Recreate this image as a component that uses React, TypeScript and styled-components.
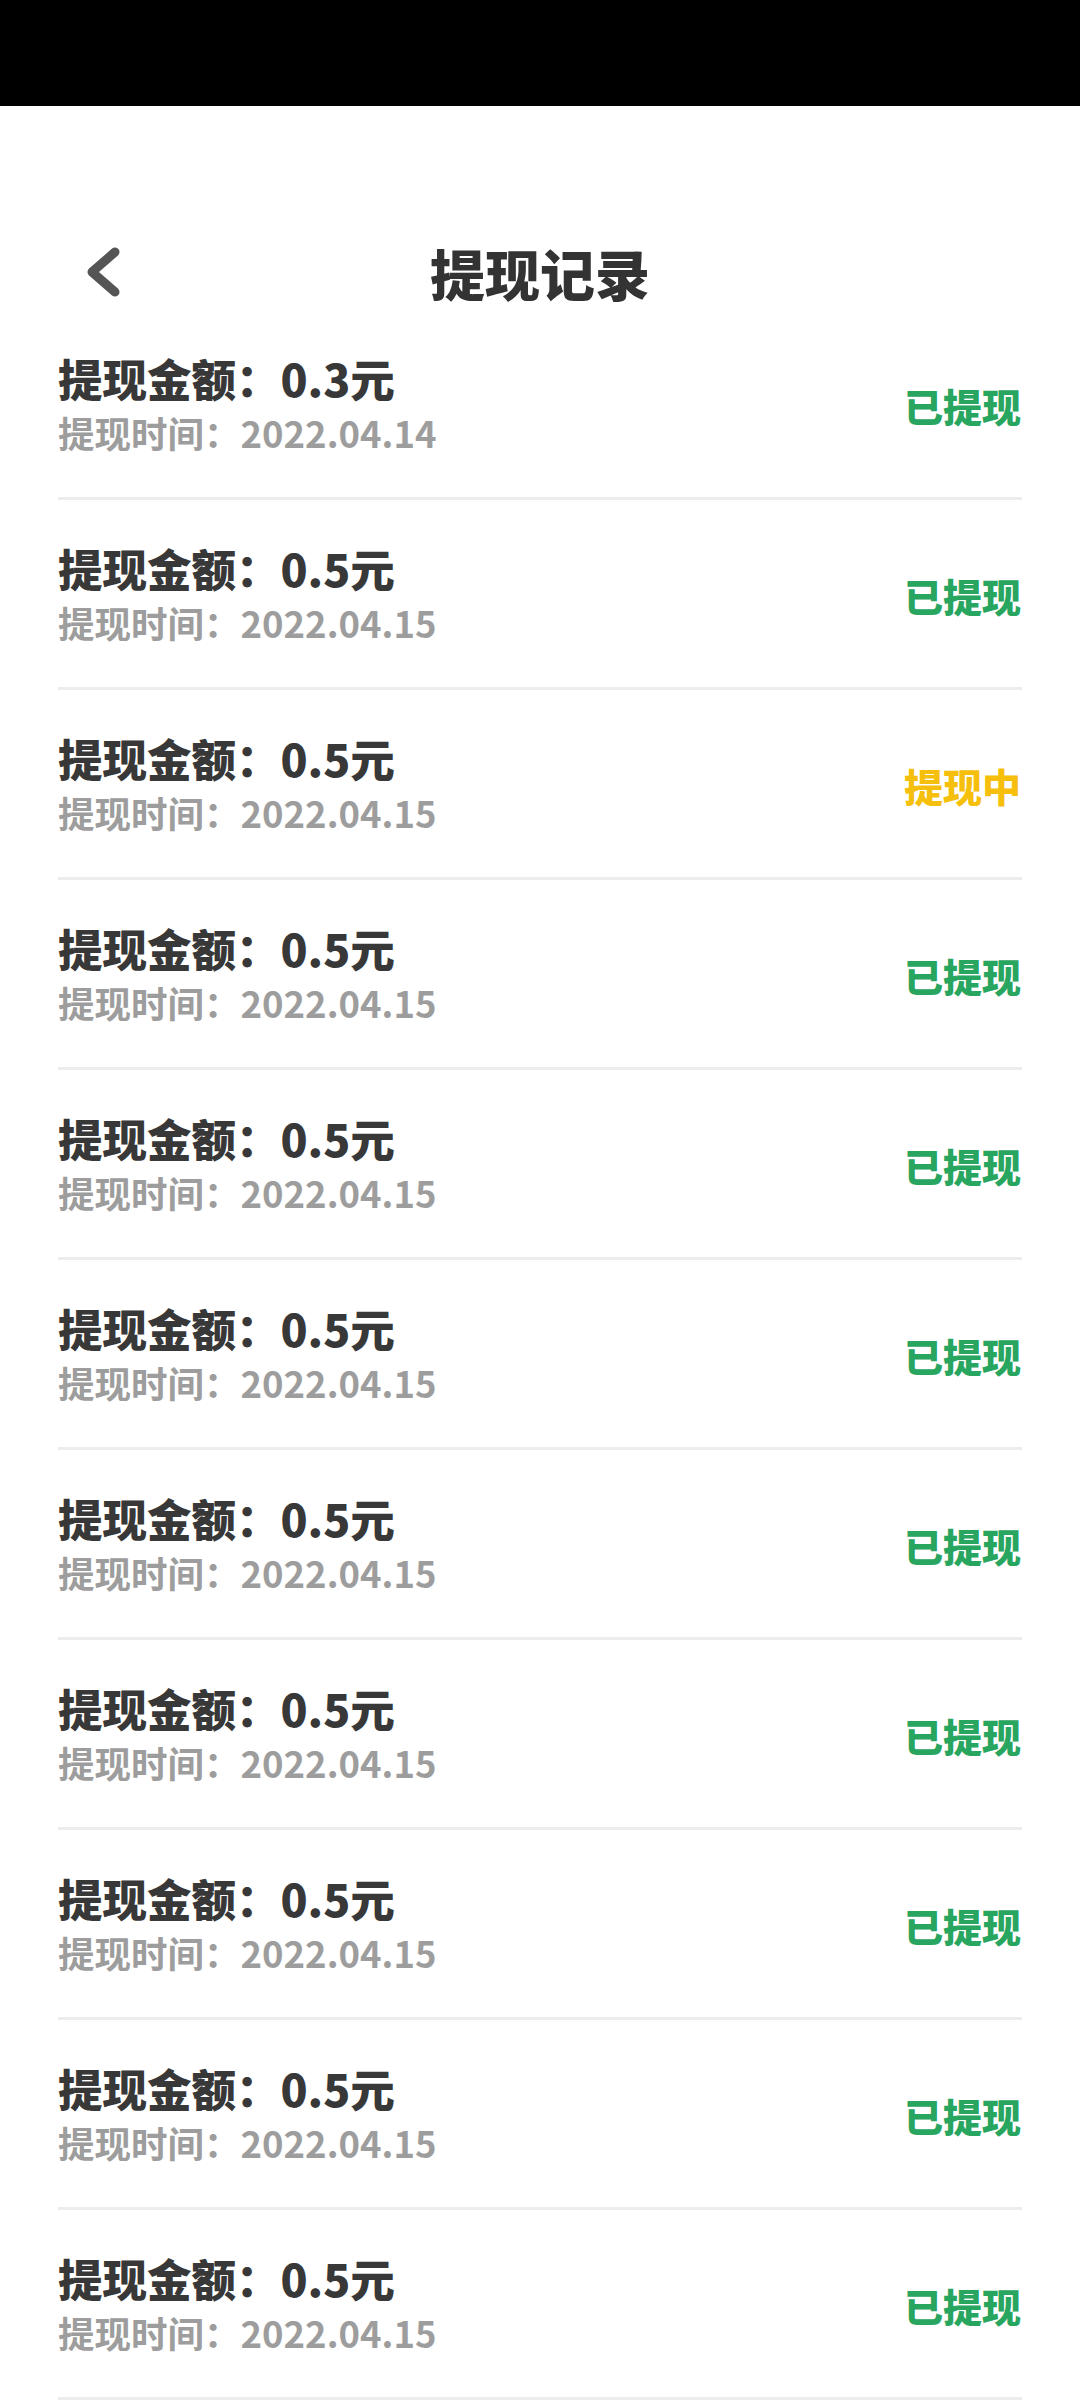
import React from 'react';
import styled, { createGlobalStyle } from 'styled-components';

const GlobalStyle = createGlobalStyle`
  html, body {
    margin: 0;
    padding: 0;
    background: #ffffff;
  }
  body {
    font-family: "Noto Sans CJK SC", "Noto Sans", sans-serif;
  }
`;

type Status = 'done' | 'pending';

interface RecordItem {
  amount: string;
  date: string;
  status: Status;
}

const records: RecordItem[] = [
  { amount: '0.3', date: '2022.04.14', status: 'done' },
  { amount: '0.5', date: '2022.04.15', status: 'done' },
  { amount: '0.5', date: '2022.04.15', status: 'pending' },
  { amount: '0.5', date: '2022.04.15', status: 'done' },
  { amount: '0.5', date: '2022.04.15', status: 'done' },
  { amount: '0.5', date: '2022.04.15', status: 'done' },
  { amount: '0.5', date: '2022.04.15', status: 'done' },
  { amount: '0.5', date: '2022.04.15', status: 'done' },
  { amount: '0.5', date: '2022.04.15', status: 'done' },
  { amount: '0.5', date: '2022.04.15', status: 'done' },
  { amount: '0.5', date: '2022.04.15', status: 'done' },
];

const Page = styled.div`
  width: 1080px;
  min-height: 2400px;
  background: #ffffff;
  overflow: hidden;
`;

const StatusBar = styled.div`
  height: 106px;
  background: #000000;
`;

const NavBar = styled.header`
  margin-top: 128px;
  height: 76px;
  display: grid;
  grid-template-columns: 1fr auto 1fr;
  align-items: center;
`;

const BackButton = styled.button`
  justify-self: start;
  margin-left: 80px;
  width: 40px;
  height: 60px;
  padding: 0;
  border: none;
  background: transparent;
  display: flex;
  align-items: center;
  justify-content: center;
  cursor: pointer;
`;

const Title = styled.h1`
  margin: 0;
  font-size: 55px;
  line-height: 76px;
  font-weight: 900;
  color: #333333;
`;

const List = styled.ul`
  list-style: none;
  margin: 0;
  padding: 0;
`;

const Row = styled.li`
  margin: 0 58px;
  height: 187px;
  border-bottom: 3px solid #ededed;
  display: flex;
  align-items: center;
  justify-content: space-between;
`;

const Info = styled.div`
  display: flex;
  flex-direction: column;
  margin-top: 3px;
`;

const Amount = styled.div`
  font-size: 44.5px;
  line-height: 56px;
  font-weight: 900;
  color: #383838;
`;

const DateLine = styled.div`
  font-size: 36.5px;
  line-height: 54px;
  font-weight: 700;
  color: #9d9d9d;
`;

const StatusText = styled.span<{ $status: Status }>`
  font-size: 39px;
  line-height: 50px;
  font-weight: 900;
  margin-top: 3px;
  margin-right: 1px;
  color: ${(p) => (p.$status === 'done' ? '#28a55f' : '#f5bf0c')};
`;

const Chevron = () => (
  <svg width="40" height="60" viewBox="0 0 40 60">
    <polyline
      points="35,10 12,30 35,50"
      fill="none"
      stroke="#555555"
      strokeWidth="9"
      strokeLinecap="round"
      strokeLinejoin="round"
    />
  </svg>
);

export default function App() {
  return (
    <Page>
      <GlobalStyle />
      <StatusBar />
      <NavBar>
        <BackButton aria-label="返回">
          <Chevron />
        </BackButton>
        <Title>提现记录</Title>
        <span />
      </NavBar>
      <List>
        {records.map((r, i) => (
          <Row key={i}>
            <Info>
              <Amount>提现金额：{r.amount}元</Amount>
              <DateLine>提现时间：{r.date}</DateLine>
            </Info>
            <StatusText $status={r.status}>
              {r.status === 'done' ? '已提现' : '提现中'}
            </StatusText>
          </Row>
        ))}
      </List>
    </Page>
  );
}
